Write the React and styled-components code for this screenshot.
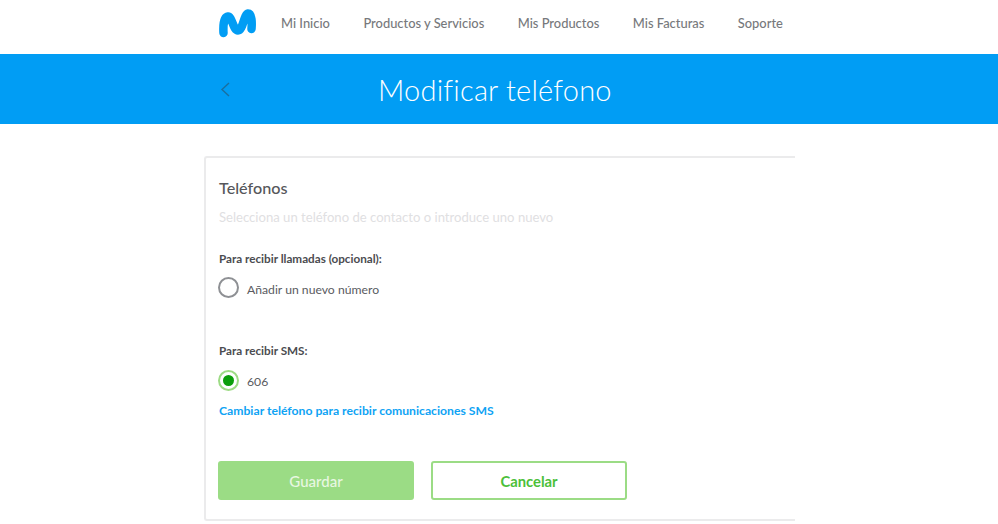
import styled, { createGlobalStyle } from "styled-components";

const Global = createGlobalStyle`
  html, body { margin: 0; padding: 0; background: #fff; }
  body { font-family: Lato, "Open Sans", sans-serif; }
`;

const Page = styled.div`
  width: 998px;
  height: 524px;
  overflow: hidden;
`;

const Nav = styled.nav`
  height: 54px;
  padding-left: 219px;
  display: flex;
  align-items: center;
`;

const Logo = styled.svg`
  width: 37px;
  height: 30px;
  margin-right: 25px;
  margin-top: -6px;
`;

const NavLinks = styled.div`
  display: flex;
  gap: 33.5px;
  margin-top: -9px;
`;

const NavLink = styled.a`
  font-size: 12.9px;
  font-weight: 500;
  color: #77797c;
`;

const Banner = styled.header`
  height: 70px;
  background: #019df4;
  padding-left: 219px;
  display: flex;
  align-items: center;
`;

const BackIcon = styled.svg`
  width: 14px;
  height: 18px;
`;

const Title = styled.h1`
  margin: 0 0 0 145px;
  font-size: 29px;
  font-weight: 300;
  color: #fff;
  letter-spacing: 0.2px;
`;

const Card = styled.section`
  width: 576px;
  height: 341px;
  margin: 32px 0 0 204px;
  padding: 20px 0 0 13px;
  border: solid #ebebec;
  border-width: 2px 0 2px 2px;
  border-radius: 3px 0 0 3px;
`;

const CardInner = styled.div`
  display: flex;
  flex-direction: column;
`;

const CardTitle = styled.h2`
  margin: 0;
  font-size: 16.2px;
  line-height: 20px;
  font-weight: 500;
  color: #56575b;
`;

const Hint = styled.p`
  margin: 10px 0 0;
  font-size: 13.1px;
  line-height: 18px;
  color: #dfe0e2;
`;

const Label = styled.div`
  margin-top: ${(p) => p.$top}px;
  font-size: 11.7px;
  line-height: 16px;
  font-weight: 700;
  color: #4b4c50;
`;

const Option = styled.label`
  margin-top: ${(p) => p.$top}px;
  margin-left: -1px;
  display: flex;
  align-items: center;
  gap: 8px;
  font-size: 12.2px;
  color: #5a5b5f;
`;

const OptionText = styled.span`
  position: relative;
  top: ${(p) => p.$drop}px;
`;

const Radio = styled.span`
  width: 17px;
  height: 17px;
  border-radius: 50%;
  border: 2px solid ${(p) => (p.$checked ? "#9ddb85" : "#8e9094")};
  display: flex;
  align-items: center;
  justify-content: center;
  flex-shrink: 0;
  &::after {
    content: "";
    display: ${(p) => (p.$checked ? "block" : "none")};
    width: 11px;
    height: 11px;
    border-radius: 50%;
    background: #0b9e0b;
  }
`;

const ChangeLink = styled.a`
  margin-top: 12px;
  font-size: 12.2px;
  line-height: 16px;
  font-weight: 700;
  color: #0fa3f4;
`;

const Actions = styled.div`
  margin-top: 42px;
  margin-left: -1px;
  display: flex;
  gap: 17px;
`;

const Button = styled.button`
  width: 196px;
  height: 39px;
  box-sizing: border-box;
  border-radius: 3px;
  border: 2px solid #9bdc85;
  background: ${(p) => (p.$primary ? "#9bdc85" : "#fff")};
  color: ${(p) => (p.$primary ? "#e8f7e2" : "#4cc03a")};
  font-family: inherit;
  font-size: ${(p) => (p.$primary ? "15px" : "14.8px")};
  font-weight: ${(p) => (p.$primary ? 500 : 700)};
  padding: 0;
`;

const links = ["Mi Inicio", "Productos y Servicios", "Mis Productos", "Mis Facturas", "Soporte"];

export default function App() {
  return (
    <Page>
      <Global />
      <Nav>
        <Logo viewBox="0 0 37 30">
          <path
            d="M4.5 24 C4 16 5 8 9 7.5 C13 7 14 21.5 19 21.5 C24 21.5 25 5 29 4.5 C33 4.5 33 14 32.5 20"
            fill="none"
            stroke="#019df4"
            strokeWidth="8.5"
            strokeLinecap="round"
          />
        </Logo>
        <NavLinks>
          {links.map((l) => (
            <NavLink key={l}>{l}</NavLink>
          ))}
        </NavLinks>
      </Nav>
      <Banner>
        <BackIcon viewBox="0 0 14 18">
          <path d="M10 3 L3 9.5 L10 16" fill="none" stroke="#1a6f9f" strokeWidth="1.4" />
        </BackIcon>
        <Title>Modificar teléfono</Title>
      </Banner>
      <Card>
        <CardInner>
          <CardTitle>Teléfonos</CardTitle>
          <Hint>Selecciona un teléfono de contacto o introduce uno nuevo</Hint>
          <Label $top={24}>Para recibir llamadas (opcional):</Label>
          <Option $top={11}>
            <Radio />
            <OptionText $drop={2}>Añadir un nuevo número</OptionText>
          </Option>
          <Label $top={44}>Para recibir SMS:</Label>
          <Option $top={12}>
            <Radio $checked />
            <OptionText $drop={1}>606</OptionText>
          </Option>
          <ChangeLink>Cambiar teléfono para recibir comunicaciones SMS</ChangeLink>
          <Actions>
            <Button $primary>Guardar</Button>
            <Button>Cancelar</Button>
          </Actions>
        </CardInner>
      </Card>
    </Page>
  );
}
